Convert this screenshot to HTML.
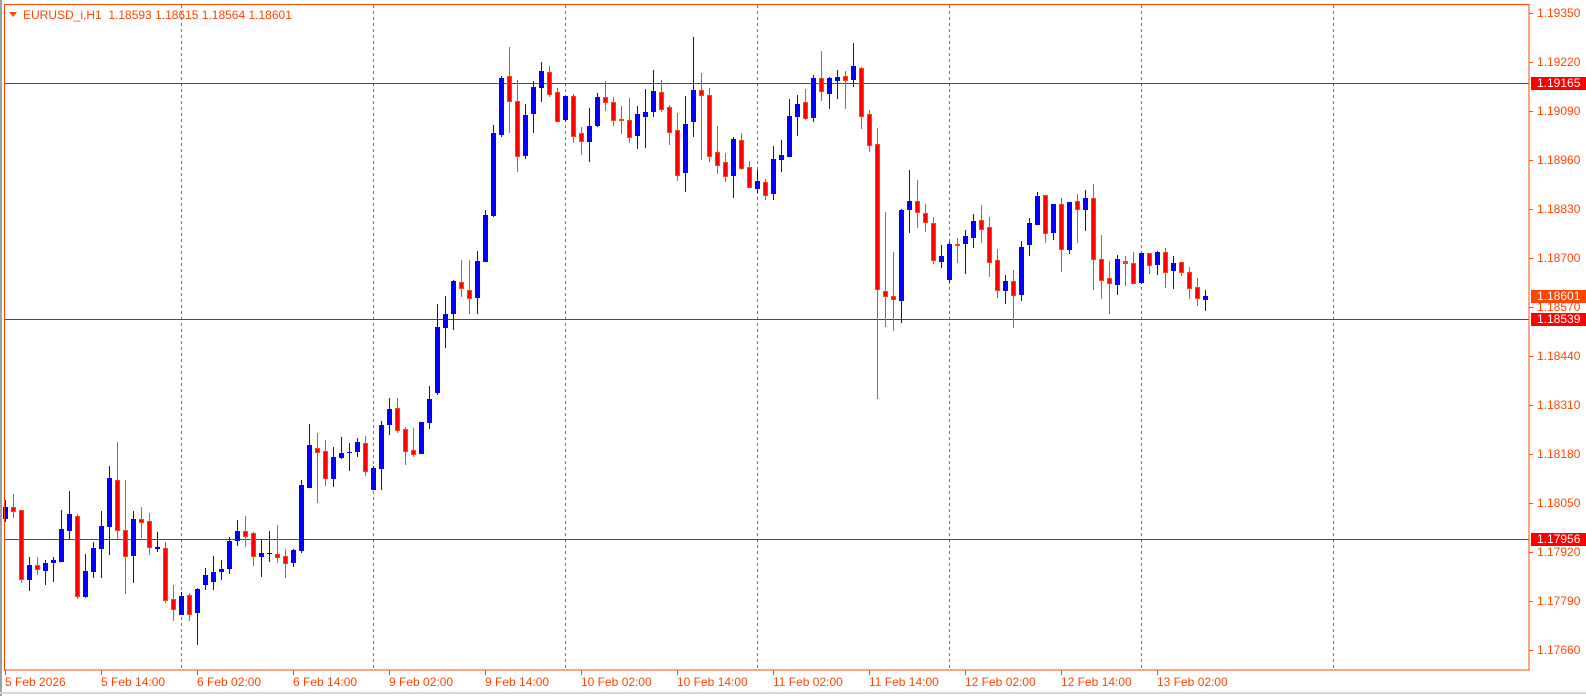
<!DOCTYPE html>
<html><head><meta charset="utf-8"><style>
html,body{margin:0;padding:0;background:#fff;width:1586px;height:696px;overflow:hidden}
svg{display:block}
text{font-family:"Liberation Sans",sans-serif;font-size:12px}
</style></head><body>
<svg id="c" width="1586" height="696" xmlns="http://www.w3.org/2000/svg">
<rect x="0" y="0" width="1586" height="696" fill="#fff"/>
<rect x="0" y="0" width="2" height="696" fill="#a0a0a0"/>
<rect x="0" y="692" width="1586" height="2" fill="#d8d8d8"/>
<g id="grid"></g>
<line x1="4" y1="83.5" x2="1529" y2="83.5" stroke="#ff0000" stroke-width="1"/>
<line x1="4" y1="319.5" x2="1529" y2="319.5" stroke="#ff0000" stroke-width="1"/>
<line x1="4" y1="539.5" x2="1529" y2="539.5" stroke="#ff0000" stroke-width="1"/>
<g id="candles"></g>
<rect x="4.5" y="4.5" width="1524.5" height="665.5" fill="none" stroke="#ff4500" stroke-width="1"/>
<g id="axis"></g>
<polygon points="9,12 17,12 13,17" fill="#ff4500"/>
<text x="23" y="19" fill="#ff4500">EURUSD_i,H1&#160;&#160;1.18593 1.18615 1.18564 1.18601</text>
</svg>
<script>
var NS="http://www.w3.org/2000/svg";
function el(p,t,a,txt){var e=document.createElementNS(NS,t);for(var k in a)e.setAttribute(k,a[k]);if(txt)e.textContent=txt;p.appendChild(e);return e;}
var g=document.getElementById('grid');
[181,373,565,757,949,1141,1333].forEach(function(x){el(g,'line',{x1:x+0.5,y1:5,x2:x+0.5,y2:670,stroke:'#ff4500','stroke-width':1,'stroke-dasharray':'3,3'});});
var d=[
[5,'B',507,519,500,522],[13,'R',507,511,494,518],[21,'R',510,579,510,583],[29,'B',565,580,557,591],[37,'R',565,569,557,575],
[45,'B',563,571,560,585],[53,'B',560,563,557,582],[61,'B',529,562,510,562],[69,'B',514,531,491,539],[77,'R',516,596,514,599],
[85,'B',571,597,554,598],[93,'B',548,572,542,578],[101,'B',526,549,511,578],[109,'B',478,527,466,555],[117,'R',480,530,442,539],
[125,'R',530,556,480,594],[133,'B',519,556,511,583],[141,'R',519,522,507,538],[149,'R',521,547,513,555],[157,'B',547,549,532,552],
[165,'R',548,600,542,603],[173,'R',599,609,585,621],[181,'B',596,615,592,615],[189,'R',595,614,593,621],[197,'B',589,613,588,645],
[205,'B',575,585,568,590],[213,'B',572,582,556,590],[221,'B',569,572,560,580],[229,'B',541,569,537,574],[237,'B',531,541,520,546],
[245,'R',531,536,516,547],[253,'R',533,556,532,566],[261,'B',553,557,540,577],[269,'B',553,554,531,562],[277,'R',554,557,525,563],
[285,'R',556,563,549,578],[293,'B',550,563,549,567],[301,'B',485,551,480,553],[309,'B',445,488,424,488],[317,'R',448,452,433,503],
[325,'R',451,478,440,486],[333,'B',457,479,447,487],[341,'B',453,458,437,459],[349,'B',452,453,443,471],[357,'B',442,452,438,457],
[365,'R',443,471,436,476],[373,'B',468,490,466,490],[381,'B',425,469,421,490],[389,'B',409,425,398,435],[397,'R',408,430,398,433],
[405,'R',429,451,427,465],[413,'R',450,454,428,457],[421,'B',422,454,422,454],[429,'B',399,423,386,429],[437,'B',327,393,304,395],
[445,'B',314,328,296,348],[453,'B',281,314,280,330],[461,'R',282,288,260,297],[469,'R',290,298,260,314],[477,'B',261,298,251,314],
[485,'B',215,262,210,262],[493,'B',133,216,125,217],[501,'B',78,135,76,137],[509,'R',76,101,47,133],[517,'R',101,156,80,172],
[525,'B',115,156,104,159],[533,'B',87,114,81,133],[541,'B',71,88,62,102],[549,'R',72,94,66,97],[557,'R',92,121,88,121],
[565,'B',96,120,96,122],[573,'R',96,136,94,143],[581,'R',133,141,127,155],[589,'B',126,142,108,162],[597,'B',97,126,93,127],
[605,'R',97,102,81,111],[613,'R',102,120,97,126],[621,'R',119,120,106,134],[629,'R',120,137,98,143],[637,'B',114,136,106,149],
[645,'B',112,117,89,148],[653,'B',91,112,70,117],[661,'R',92,109,80,112],[669,'R',107,132,105,145],[677,'R',130,175,113,181],
[685,'B',124,173,96,192],[693,'B',90,122,37,137],[701,'R',90,95,73,160],[709,'R',95,156,88,162],[717,'R',152,165,126,174],
[725,'R',162,176,153,182],[733,'B',139,176,137,198],[741,'R',140,168,133,170],[749,'R',167,187,161,187],[757,'B',181,189,170,193],
[765,'R',182,195,179,200],[773,'B',159,194,146,200],[781,'B',155,160,140,172],[789,'B',116,157,99,157],[797,'B',104,117,95,136],
[805,'R',102,118,89,120],[813,'B',78,118,75,122],[821,'R',78,91,51,101],[829,'B',78,94,77,109],[837,'B',77,81,70,99],
[845,'R',76,80,71,109],[853,'B',66,80,43,87],[861,'R',68,116,67,129],[869,'R',114,145,110,152],[877,'R',144,289,128,399],
[885,'R',291,296,212,327],[893,'R',296,299,252,331],[901,'B',210,301,209,323],[909,'B',201,210,170,233],[917,'R',201,212,180,228],
[925,'R',213,222,204,232],[933,'R',223,260,217,264],[941,'B',256,262,245,268],[949,'B',244,280,242,283],[957,'R',244,245,238,263],
[965,'B',236,244,230,274],[973,'B',221,238,214,248],[981,'R',220,229,205,243],[989,'R',227,262,217,277],[997,'R',260,290,249,298],
[1005,'B',281,291,275,304],[1013,'R',281,295,270,328],[1021,'B',247,295,241,301],[1029,'B',223,245,218,256],[1037,'B',196,225,192,225],
[1045,'R',195,233,195,243],[1053,'B',204,233,204,240],[1061,'R',204,249,198,272],[1069,'B',202,250,202,254],[1077,'R',201,209,194,243],
[1085,'B',198,210,190,231],[1093,'R',198,259,184,290],[1101,'R',259,280,235,299],[1109,'R',278,283,261,314],[1117,'B',259,285,255,295],
[1125,'R',261,263,256,286],[1133,'R',263,283,252,283],[1141,'B',253,283,253,284],[1149,'R',253,265,253,274],[1157,'B',252,265,251,275],
[1165,'R',252,272,248,288],[1173,'B',263,271,256,289],[1181,'R',262,272,262,276],[1189,'R',272,288,267,299],[1197,'R',287,298,278,306],
[1205,'B',296,300,290,311]];
var c=document.getElementById('candles');
d.forEach(function(b){var x=b[0],bull=b[1]=='B';var wc=bull?'#0000ff':'#ff4500';
el(c,'rect',{x:x,y:b[4],width:1,height:Math.max(1,b[5]-b[4]),fill:wc});
var h=Math.max(1,b[3]-b[2]);
if(bull){el(c,'rect',{x:x-2,y:b[2],width:5,height:h,fill:'#0000ff'});}
else{if(h>2){el(c,'rect',{x:x-2,y:b[2],width:5,height:h+1,fill:'#ff4500'});el(c,'rect',{x:x-1,y:b[2]+1,width:3,height:h-1,fill:'#ff0000'});}
else el(c,'rect',{x:x-2,y:b[2],width:5,height:h+1,fill:'#ff4500'});}
});
var a=document.getElementById('axis');
var labs=['1.19350','1.19220','1.19090','1.18960','1.18830','1.18700','1.18570','1.18440','1.18310','1.18180','1.18050','1.17920','1.17790','1.17660'];
labs.forEach(function(t,i){var y=13+i*49;el(a,'line',{x1:1529,y1:y+0.5,x2:1533,y2:y+0.5,stroke:'#ff4500'});el(a,'text',{x:1537,y:y+4,fill:'#ff4500'},t);});
[[83,'1.19165','#ff0000'],[296,'1.18601','#ff4500'],[319,'1.18539','#ff0000'],[539,'1.17956','#ff0000']].forEach(function(b){
el(a,'rect',{x:1531,y:b[0]-6,width:55,height:13,fill:b[2]});el(a,'text',{x:1537,y:b[0]+4,fill:'#fff'},b[1]);});
var tl=['5 Feb 2026','5 Feb 14:00','6 Feb 02:00','6 Feb 14:00','9 Feb 02:00','9 Feb 14:00','10 Feb 02:00','10 Feb 14:00','11 Feb 02:00','11 Feb 14:00','12 Feb 02:00','12 Feb 14:00','13 Feb 02:00'];
tl.forEach(function(t,i){var x=5+96*i;el(a,'line',{x1:x+0.5,y1:670,x2:x+0.5,y2:675,stroke:'#ff4500'});el(a,'text',{x:x,y:686,fill:'#ff4500'},t);});
</script>
</body></html>
